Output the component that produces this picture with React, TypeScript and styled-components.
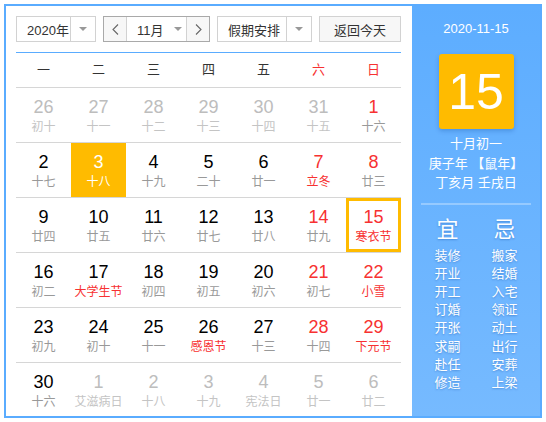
import React from 'react';
import styled, { createGlobalStyle } from 'styled-components';

const GlobalStyle = createGlobalStyle`
  body {
    margin: 0;
    padding: 4px;
    background: #ffffff;
    font-family: "Liberation Sans", "Noto Sans CJK SC", sans-serif;
  }
`;

const RED = '#f73131';
const ORANGE = '#ffbb00';

const Box = styled.div`
  display: flex;
  width: 538px;
  height: 414px;
  box-sizing: border-box;
  border: 2px solid #5aacff;
  overflow: hidden;
`;

const Left = styled.div`
  width: 406px;
  padding: 10px 11px 0 10px;
  box-sizing: border-box;
  overflow: hidden;
`;

const Toolbar = styled.div`
  display: flex;
  gap: 7px;
  padding-bottom: 10px;
  border-bottom: 1px solid #5aacff;
`;

const Select = styled.div<{ $w: number }>`
  display: flex;
  width: ${({ $w }) => $w}px;
  height: 26px;
  box-sizing: border-box;
  border: 1px solid #d2d2d2;
  background: #fff;
  font-size: 13px;
  color: #333;
`;

const SelectText = styled.div`
  flex: 1;
  display: flex;
  align-items: center;
  padding-left: 10px;
`;

const ArrowCell = styled.div`
  width: 24px;
  border-left: 1px solid #d2d2d2;
  display: flex;
  align-items: center;
  justify-content: center;
`;

const Triangle = styled.span`
  width: 0;
  height: 0;
  border-left: 4px solid transparent;
  border-right: 4px solid transparent;
  border-top: 4px solid #999;
`;

const MonthGroup = styled.div`
  display: flex;
  width: 107px;
  height: 26px;
  box-sizing: border-box;
  border: 1px solid #a9a9a9;
  font-size: 13px;
  color: #333;
`;

const NavBtn = styled.div<{ $side: 'l' | 'r' }>`
  width: 22px;
  background: #f7f7f7;
  display: flex;
  align-items: center;
  justify-content: center;
  ${({ $side }) => ($side === 'l' ? 'border-right' : 'border-left')}: 1px solid #d2d2d2;
`;

const MonthMid = styled.div`
  flex: 1;
  display: flex;
  align-items: center;
  padding-left: 10px;
  gap: 10px;
  background: #fff;
`;

const TodayBtn = styled.div`
  width: 82px;
  height: 26px;
  box-sizing: border-box;
  border: 1px solid #d2d2d2;
  background: #f7f7f7;
  font-size: 13px;
  color: #333;
  display: flex;
  align-items: center;
  justify-content: center;
`;

const WeekHead = styled.div`
  display: grid;
  grid-template-columns: repeat(7, 55px);
  height: 34px;
  border-bottom: 1px solid #d6d6d6;
`;

const WeekName = styled.div<{ $red?: boolean }>`
  font-size: 13px;
  line-height: 34px;
  text-align: center;
  color: ${({ $red }) => ($red ? RED : '#333')};
`;

const Row = styled.div`
  display: grid;
  grid-template-columns: repeat(7, 55px);
  height: 55px;
  box-sizing: border-box;
  border-bottom: 1px solid #d6d6d6;

  &:last-child {
    border-bottom: none;
  }
`;

const Cell = styled.div<{ $sel?: boolean; $today?: boolean }>`
  box-sizing: border-box;
  padding-top: 8px;
  text-align: center;
  background: ${({ $sel }) => ($sel ? ORANGE : 'transparent')};
  box-shadow: ${({ $today }) => ($today ? `inset 0 0 0 3px ${ORANGE}` : 'none')};
`;

const Num = styled.div<{ $color: string }>`
  font-size: 18px;
  line-height: 22px;
  color: ${({ $color }) => $color};
`;

const Lunar = styled.div<{ $color: string }>`
  font-size: 12px;
  line-height: 18px;
  color: ${({ $color }) => $color};
  white-space: nowrap;
`;

const Right = styled.div`
  flex: 1;
  background: linear-gradient(#5dadff, #76baff);
  color: #fff;
  display: flex;
  flex-direction: column;
  align-items: center;
  padding-top: 15px;
`;

const DateLine = styled.div`
  font-size: 13px;
  line-height: 16px;
`;

const BigDay = styled.div`
  margin-top: 17px;
  width: 75px;
  height: 75px;
  border-radius: 3px;
  background: ${ORANGE};
  box-shadow: 0 2px 4px rgba(0, 60, 140, 0.25);
  display: flex;
  align-items: center;
  justify-content: center;
  font-size: 50px;
`;

const InfoLines = styled.div`
  margin-top: 5px;
  font-size: 13px;
  line-height: 19.5px;
  text-align: center;
`;

const Divider = styled.div`
  margin-top: 10px;
  width: 110px;
  height: 2px;
  background: rgba(255, 255, 255, 0.3);
`;

const YiJi = styled.div`
  margin-top: 12px;
  display: flex;
  gap: 5px;
  text-shadow: 0 1px 2px rgba(0, 60, 150, 0.35);
`;

const Col = styled.div`
  width: 52px;
  text-align: center;
`;

const ColTitle = styled.div`
  font-size: 22px;
  line-height: 26px;
  margin-bottom: 4px;
`;

const ColItem = styled.div`
  font-size: 13px;
  line-height: 18.2px;
`;

type Day = {
  d: number;
  l: string;
  other?: boolean;
  wk?: boolean;
  fest?: boolean;
  sel?: boolean;
  today?: boolean;
};

const o = (d: number, l: string): Day => ({ d, l, other: true });

const WEEKS: Day[][] = [
  [o(26, '初十'), o(27, '十一'), o(28, '十二'), o(29, '十三'), o(30, '十四'), o(31, '十五'), { d: 1, l: '十六', wk: true }],
  [
    { d: 2, l: '十七' },
    { d: 3, l: '十八', sel: true },
    { d: 4, l: '十九' },
    { d: 5, l: '二十' },
    { d: 6, l: '廿一' },
    { d: 7, l: '立冬', wk: true, fest: true },
    { d: 8, l: '廿三', wk: true },
  ],
  [
    { d: 9, l: '廿四' },
    { d: 10, l: '廿五' },
    { d: 11, l: '廿六' },
    { d: 12, l: '廿七' },
    { d: 13, l: '廿八' },
    { d: 14, l: '廿九', wk: true },
    { d: 15, l: '寒衣节', wk: true, fest: true, today: true },
  ],
  [
    { d: 16, l: '初二' },
    { d: 17, l: '大学生节', fest: true },
    { d: 18, l: '初四' },
    { d: 19, l: '初五' },
    { d: 20, l: '初六' },
    { d: 21, l: '初七', wk: true },
    { d: 22, l: '小雪', wk: true, fest: true },
  ],
  [
    { d: 23, l: '初九' },
    { d: 24, l: '初十' },
    { d: 25, l: '十一' },
    { d: 26, l: '感恩节', fest: true },
    { d: 27, l: '十三' },
    { d: 28, l: '十四', wk: true },
    { d: 29, l: '下元节', wk: true, fest: true },
  ],
  [{ d: 30, l: '十六' }, o(1, '艾滋病日'), o(2, '十八'), o(3, '十九'), o(4, '宪法日'), o(5, '廿一'), o(6, '廿二')],
];

const WEEK_NAMES = ['一', '二', '三', '四', '五', '六', '日'];
const YI = ['装修', '开业', '开工', '订婚', '开张', '求嗣', '赴任', '修造'];
const JI = ['搬家', '结婚', '入宅', '领证', '动土', '出行', '安葬', '上梁'];

const numColor = (c: Day) => (c.sel ? '#fff' : c.other ? '#bdbdbd' : c.wk ? RED : '#000');
const lunarColor = (c: Day) => (c.sel ? '#fff' : c.other ? '#c4c4c4' : c.fest ? RED : '#999');

const Chevron = ({ dir }: { dir: 'l' | 'r' }) => (
  <svg width="7" height="11" viewBox="0 0 7 11">
    <polyline
      points={dir === 'l' ? '6,0.5 1,5.5 6,10.5' : '1,0.5 6,5.5 1,10.5'}
      fill="none"
      stroke="#666"
      strokeWidth="1.1"
    />
  </svg>
);

export default function App() {
  return (
    <>
      <GlobalStyle />
      <Box>
        <Left>
          <Toolbar>
            <Select $w={80}>
              <SelectText>2020年</SelectText>
              <ArrowCell>
                <Triangle />
              </ArrowCell>
            </Select>
            <MonthGroup>
              <NavBtn $side="l">
                <Chevron dir="l" />
              </NavBtn>
              <MonthMid>
                11月
                <Triangle />
              </MonthMid>
              <NavBtn $side="r">
                <Chevron dir="r" />
              </NavBtn>
            </MonthGroup>
            <Select $w={95}>
              <SelectText>假期安排</SelectText>
              <ArrowCell>
                <Triangle />
              </ArrowCell>
            </Select>
            <TodayBtn>返回今天</TodayBtn>
          </Toolbar>
          <WeekHead>
            {WEEK_NAMES.map((n, i) => (
              <WeekName key={n} $red={i >= 5}>
                {n}
              </WeekName>
            ))}
          </WeekHead>
          {WEEKS.map((week, wi) => (
            <Row key={wi}>
              {week.map((c, ci) => (
                <Cell key={ci} $sel={c.sel} $today={c.today}>
                  <Num $color={numColor(c)}>{c.d}</Num>
                  <Lunar $color={lunarColor(c)}>{c.l}</Lunar>
                </Cell>
              ))}
            </Row>
          ))}
        </Left>
        <Right>
          <DateLine>2020-11-15</DateLine>
          <BigDay>15</BigDay>
          <InfoLines>
            <div>十月初一</div>
            <div>庚子年 【鼠年】</div>
            <div>丁亥月 壬戌日</div>
          </InfoLines>
          <Divider />
          <YiJi>
            <Col>
              <ColTitle>宜</ColTitle>
              {YI.map((t) => (
                <ColItem key={t}>{t}</ColItem>
              ))}
            </Col>
            <Col>
              <ColTitle>忌</ColTitle>
              {JI.map((t) => (
                <ColItem key={t}>{t}</ColItem>
              ))}
            </Col>
          </YiJi>
        </Right>
      </Box>
    </>
  );
}
